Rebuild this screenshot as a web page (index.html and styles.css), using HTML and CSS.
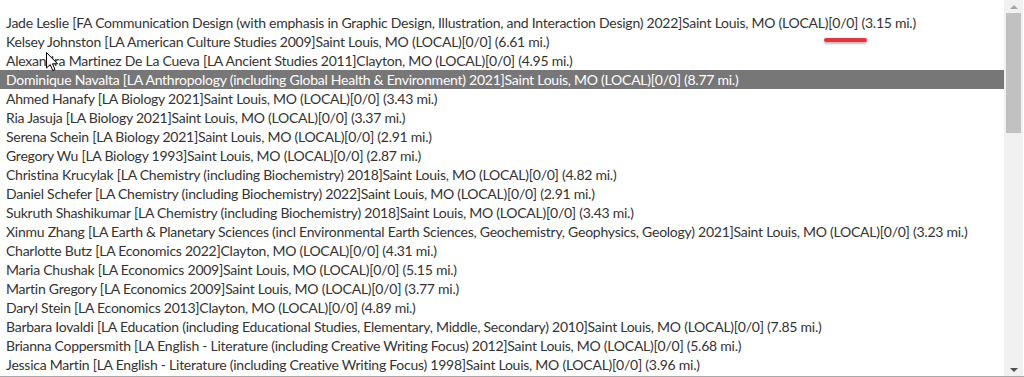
FILE: index.html
```html
<!DOCTYPE html>
<html lang="en">
<head>
<meta charset="utf-8">
<title>Select list</title>
<link rel="stylesheet" href="styles.css">
</head>
<body>
<div class="box">
  <div class="list">
    <div class="row">Jade Leslie [FA Communication Design (with emphasis in Graphic Design, Illustration, and Interaction Design) 2022]Saint Louis, MO (LOCAL)[0/0] (3.15 mi.)</div>
    <div class="row">Kelsey Johnston [LA American Culture Studies 2009]Saint Louis, MO (LOCAL)[0/0] (6.61 mi.)</div>
    <div class="row">Alexandra Martinez De La Cueva [LA Ancient Studies 2011]Clayton, MO (LOCAL)[0/0] (4.95 mi.)</div>
    <div class="row selected">Dominique Navalta [LA Anthropology (including Global Health &amp; Environment) 2021]Saint Louis, MO (LOCAL)[0/0] (8.77 mi.)</div>
    <div class="row">Ahmed Hanafy [LA Biology 2021]Saint Louis, MO (LOCAL)[0/0] (3.43 mi.)</div>
    <div class="row">Ria Jasuja [LA Biology 2021]Saint Louis, MO (LOCAL)[0/0] (3.37 mi.)</div>
    <div class="row">Serena Schein [LA Biology 2021]Saint Louis, MO (LOCAL)[0/0] (2.91 mi.)</div>
    <div class="row">Gregory Wu [LA Biology 1993]Saint Louis, MO (LOCAL)[0/0] (2.87 mi.)</div>
    <div class="row">Christina Krucylak [LA Chemistry (including Biochemistry) 2018]Saint Louis, MO (LOCAL)[0/0] (4.82 mi.)</div>
    <div class="row">Daniel Schefer [LA Chemistry (including Biochemistry) 2022]Saint Louis, MO (LOCAL)[0/0] (2.91 mi.)</div>
    <div class="row">Sukruth Shashikumar [LA Chemistry (including Biochemistry) 2018]Saint Louis, MO (LOCAL)[0/0] (3.43 mi.)</div>
    <div class="row">Xinmu Zhang [LA Earth &amp; Planetary Sciences (incl Environmental Earth Sciences, Geochemistry, Geophysics, Geology) 2021]Saint Louis, MO (LOCAL)[0/0] (3.23 mi.)</div>
    <div class="row">Charlotte Butz [LA Economics 2022]Clayton, MO (LOCAL)[0/0] (4.31 mi.)</div>
    <div class="row">Maria Chushak [LA Economics 2009]Saint Louis, MO (LOCAL)[0/0] (5.15 mi.)</div>
    <div class="row">Martin Gregory [LA Economics 2009]Saint Louis, MO (LOCAL)[0/0] (3.77 mi.)</div>
    <div class="row">Daryl Stein [LA Economics 2013]Clayton, MO (LOCAL)[0/0] (4.89 mi.)</div>
    <div class="row">Barbara Iovaldi [LA Education (including Educational Studies, Elementary, Middle, Secondary) 2010]Saint Louis, MO (LOCAL)[0/0] (7.85 mi.)</div>
    <div class="row">Brianna Coppersmith [LA English - Literature (including Creative Writing Focus) 2012]Saint Louis, MO (LOCAL)[0/0] (5.68 mi.)</div>
    <div class="row">Jessica Martin [LA English - Literature (including Creative Writing Focus) 1998]Saint Louis, MO (LOCAL)[0/0] (3.96 mi.)</div>
  </div>
  <div class="scrollbar">
    <div class="arrow up"></div>
    <div class="track"><div class="thumb"></div></div>
    <div class="arrow down"></div>
  </div>
  <div class="mark"></div>
  <svg class="cursor" width="13" height="20" viewBox="0 0 13 20"><path d="M0.5 0.5 L0.5 16 L4.2 12.6 L6.8 18.6 L9 17.6 L6.5 11.8 L11.5 11.8 Z" fill="#fff" stroke="#000" stroke-width="1"/></svg>
</div>
</body>
</html>
```

FILE: styles.css
```css
html, body {
  margin: 0;
  padding: 0;
  background: #fff;
}
.box {
  position: relative;
  width: 1024px;
  height: 377px;
  box-sizing: border-box;
  border-bottom: 1px solid #a9a9a9;
  display: flex;
  overflow: hidden;
}
.list {
  flex: 1;
  padding-top: 13px;
  font-family: Lato, "Liberation Sans", sans-serif;
  font-size: 14px;
  letter-spacing: -0.25px;
  color: #333;
  overflow: hidden;
}
.row {
  height: 19px;
  line-height: 19px;
  padding-left: 6px;
  white-space: nowrap;
}
.row.selected {
  background: #777;
  color: #fff;
}
.scrollbar {
  width: 19px;
  margin-right: 1px;
  background: #f1f1f1;
  display: flex;
  flex-direction: column;
}
.arrow {
  height: 13px;
  display: flex;
  justify-content: center;
  align-items: center;
}
.arrow.up::before {
  content: "";
  border-left: 4px solid transparent;
  border-right: 4px solid transparent;
  border-bottom: 4px solid #a3a3a3;
}
.arrow.down::before {
  content: "";
  border-left: 4px solid transparent;
  border-right: 4px solid transparent;
  border-top: 4px solid #505050;
}
.track {
  flex: 1;
  padding: 0 2px;
}
.thumb {
  height: 120px;
  background: #c1c1c1;
}
.mark {
  position: absolute;
  left: 824px;
  top: 38px;
  width: 43px;
  height: 4px;
  border-radius: 2px;
  background: #e8323c;
  box-shadow: 0 2px 2px rgba(0,0,0,0.25);
}
.cursor {
  position: absolute;
  left: 46px;
  top: 52px;
}
```
